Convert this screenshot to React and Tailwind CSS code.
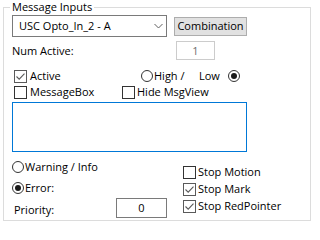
import React from "react";

const font = "font-['Segoe_UI','Open_Sans','Noto_Sans',sans-serif]";

function Check({ checked }) {
  return (
    <span className={`w-[13px] h-[13px] shrink-0 border bg-white flex items-center justify-center ${checked ? "border-[#5a5a5a]" : "border-[#333333]"}`}>
      {checked && (
        <svg width="11" height="11" viewBox="0 0 11 11">
          <path d="M1.5 5.5 L4.2 8.2 L9.5 2.6" fill="none" stroke="#5a5a5a" strokeWidth="1.1" />
        </svg>
      )}
    </span>
  );
}

function Radio({ checked }) {
  return (
    <span className="w-[12px] h-[12px] shrink-0 rounded-full border border-[#333333] bg-white flex items-center justify-center">
      {checked && <span className="w-[6px] h-[6px] rounded-full bg-[#1a1a1a]" />}
    </span>
  );
}

export default function App() {
  return (
    <div className={`w-[315px] h-[226px] bg-white pt-[7px] pl-[3px] text-[11px] leading-[14px] text-black ${font}`}>
      <div className="relative w-[308px] h-[214px] border border-[#dcdcdc]">
        <span className="absolute left-[6px] top-[-8px] px-[2px] bg-white leading-[14px]">Message Inputs</span>

        {/* combo row */}
        <div className="flex items-center mt-[7px] h-[22px] pl-[8px]">
          <div className="w-[155px] h-[22px] border border-[#7a7a7a] flex items-center justify-between pl-[6px] pr-[3px]">
            <span>USC Opto_In_2 - A</span>
            <svg width="9" height="6" viewBox="0 0 9 6">
              <path d="M0.5 1 L4.5 5 L8.5 1" fill="none" stroke="#606060" strokeWidth="1" />
            </svg>
          </div>
          <div className="ml-[7px] w-[73px] h-[19px] bg-[#e1e1e1] border border-[#adadad] flex items-center justify-center">
            Combination
          </div>
        </div>

        {/* num active */}
        <div className="flex items-center mt-[4px] h-[19px] pl-[8px]">
          <span className="w-[164px]">Num Active:</span>
          <div className="w-[39px] h-[19px] border border-[#cccccc] flex items-center justify-center text-[#6d6d6d]">1</div>
        </div>

        {/* active row */}
        <div className="flex items-center mt-[8px] h-[16px] pl-[10px]">
          <div className="w-[127px] flex items-center gap-[3px]">
            <Check checked />
            <span>Active</span>
          </div>
          <div className="w-[58px] flex items-center gap-[1px]">
            <Radio />
            <span>High /</span>
          </div>
          <span className="w-[29px]">Low</span>
          <Radio checked />
        </div>

        {/* messagebox row */}
        <div className="flex items-center h-[16px] pl-[10px]">
          <div className="w-[108px] flex items-center gap-[3px]">
            <Check />
            <span>MessageBox</span>
          </div>
          <div className="flex items-center gap-[2px]">
            <Check />
            <span>Hide MsgView</span>
          </div>
        </div>

        {/* text box */}
        <div className="mt-[2px] ml-[8px] w-[235px] h-[50px] border border-[#0078d7] bg-white" />

        {/* bottom */}
        <div className="flex">
          <div className="w-[179px] pl-[8px] flex flex-col">
            <div className="mt-[8px] h-[14px] flex items-center gap-[1px]">
              <Radio />
              <span>Warning / Info</span>
            </div>
            <div className="mt-[7px] h-[14px] flex items-center gap-[1px]">
              <Radio checked />
              <span>Error:</span>
            </div>
            <div className="mt-[3px] h-[20px] flex items-start pl-[2px]">
              <span className="w-[102px] mt-[5px]">Priority:</span>
              <div className="w-[51px] h-[20px] border border-[#7a7a7a] flex items-center justify-center">0</div>
            </div>
          </div>
          <div className="pt-[12px] flex flex-col gap-[1px]">
            <div className="h-[16px] flex items-center gap-[2px]">
              <Check />
              <span>Stop Motion</span>
            </div>
            <div className="h-[16px] flex items-center gap-[2px]">
              <Check checked />
              <span>Stop Mark</span>
            </div>
            <div className="h-[16px] flex items-center gap-[2px]">
              <Check checked />
              <span>Stop RedPointer</span>
            </div>
          </div>
        </div>
      </div>
    </div>
  );
}
